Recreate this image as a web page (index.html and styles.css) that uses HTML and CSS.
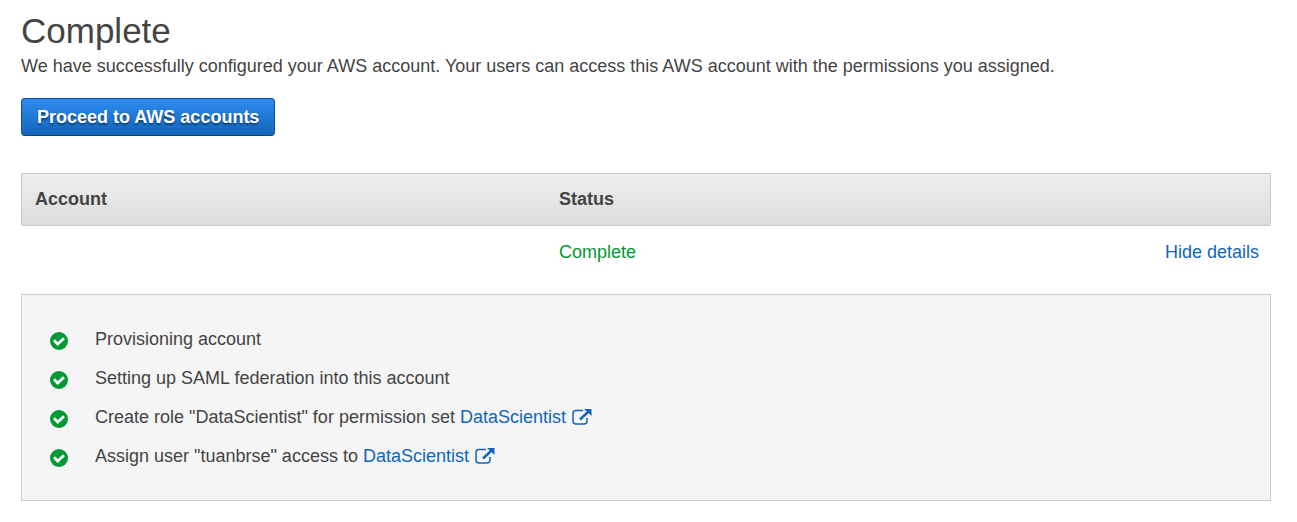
FILE: index.html
```html
<!DOCTYPE html>
<html lang="en">
<head>
<meta charset="utf-8">
<title>Complete</title>
<link rel="stylesheet" href="styles.css">
</head>
<body>
<svg class="symbols" aria-hidden="true">
  <symbol id="check" viewBox="0 0 18 18">
    <circle cx="9" cy="9" r="9" fill="#009933"/>
    <path d="M4 8.300 7.700 12l6.300-5.800" fill="none" stroke="#fff" stroke-width="2.800"/>
  </symbol>
  <symbol id="external" viewBox="0 0 20 18">
    <path d="M11 2.500H4Q1 2.500 1 5.500V13q0 3 3 3h8q3 0 3-3V10" fill="none" stroke="currentColor" stroke-width="1.500"/>
    <path d="M8 11.500 16 4" fill="none" stroke="currentColor" stroke-width="2.400"/>
    <path d="M12 1h7.500v7z" fill="currentColor"/>
  </symbol>
</svg>
<main class="page">
  <h1 class="title">Complete</h1>
  <p class="intro">We have successfully configured your AWS account. Your users can access this AWS account with the permissions you assigned.</p>
  <button class="proceed" type="button">Proceed to AWS accounts</button>
  <table class="accounts">
    <thead>
      <tr><th class="account">Account</th><th class="status">Status</th><th class="actions"></th></tr>
    </thead>
    <tbody>
      <tr><td></td><td class="done">Complete</td><td class="actions"><a class="link" href="#details">Hide details</a></td></tr>
    </tbody>
  </table>
  <ul class="details" id="details">
    <li class="step"><svg class="check"><use href="#check"/></svg><span>Provisioning account</span></li>
    <li class="step"><svg class="check"><use href="#check"/></svg><span>Setting up SAML federation into this account</span></li>
    <li class="step"><svg class="check"><use href="#check"/></svg><span>Create role "DataScientist" for permission set <a class="link" href="#role">DataScientist<svg class="external"><use href="#external"/></svg></a></span></li>
    <li class="step"><svg class="check"><use href="#check"/></svg><span>Assign user "tuanbrse" access to <a class="link" href="#user">DataScientist<svg class="external"><use href="#external"/></svg></a></span></li>
  </ul>
</main>
</body>
</html>
```
FILE: styles.css
```css
* { box-sizing: border-box; }
body {
  margin: 0;
  background: #fff;
  color: #444;
  font: 18px/24px "Liberation Sans", Arial, sans-serif;
}
.symbols { display: none; }
.page { padding: 8px 26px 20px 21px; }
.title { margin: 0; font-size: 35px; line-height: 46px; font-weight: 400; }
.intro { margin: 0 0 20px; }
.proceed {
  display: block;
  height: 38px;
  padding: 0 15px;
  border: 1px solid #0d4f96;
  border-bottom-color: #0a4078;
  border-radius: 4px;
  background: linear-gradient(#2e8bee, #1166bb);
  color: #fff;
  font: bold 18px/24px "Liberation Sans", Arial, sans-serif;
  text-shadow: 0 2px 2px rgba(0, 0, 0, .45);
}
.accounts {
  width: 100%;
  margin: 37px 0 16px;
  border-collapse: separate;
  border-spacing: 0;
  table-layout: fixed;
}
.accounts th {
  height: 53px;
  padding: 0 13px 2px;
  border: solid #c8c8c8;
  border-width: 1px 0;
  background: linear-gradient(#eee, #ddd);
  text-align: left;
}
.accounts th:first-child { border-left-width: 1px; border-radius: 2px 0 0 2px; }
.accounts th:last-child { border-right-width: 1px; border-radius: 0 2px 2px 0; }
.accounts td { height: 52px; padding: 0 12px 0 13px; }
.accounts .account { width: 42%; }
.accounts .status { width: 29%; }
.accounts .actions { text-align: right; }
.accounts .done { color: #093; }
.link { color: #1166bb; text-decoration: none; }
.details {
  display: grid;
  gap: 15px;
  margin: 0;
  padding: 32px 28px;
  border: 1px solid #ccc;
  background: #f5f5f5;
  list-style: none;
}
.step { display: flex; align-items: center; gap: 27px; }
.check { width: 18px; height: 18px; margin-top: 3px; }
.external { width: 20px; height: 18px; margin-left: 6px; vertical-align: -3px; }
```
